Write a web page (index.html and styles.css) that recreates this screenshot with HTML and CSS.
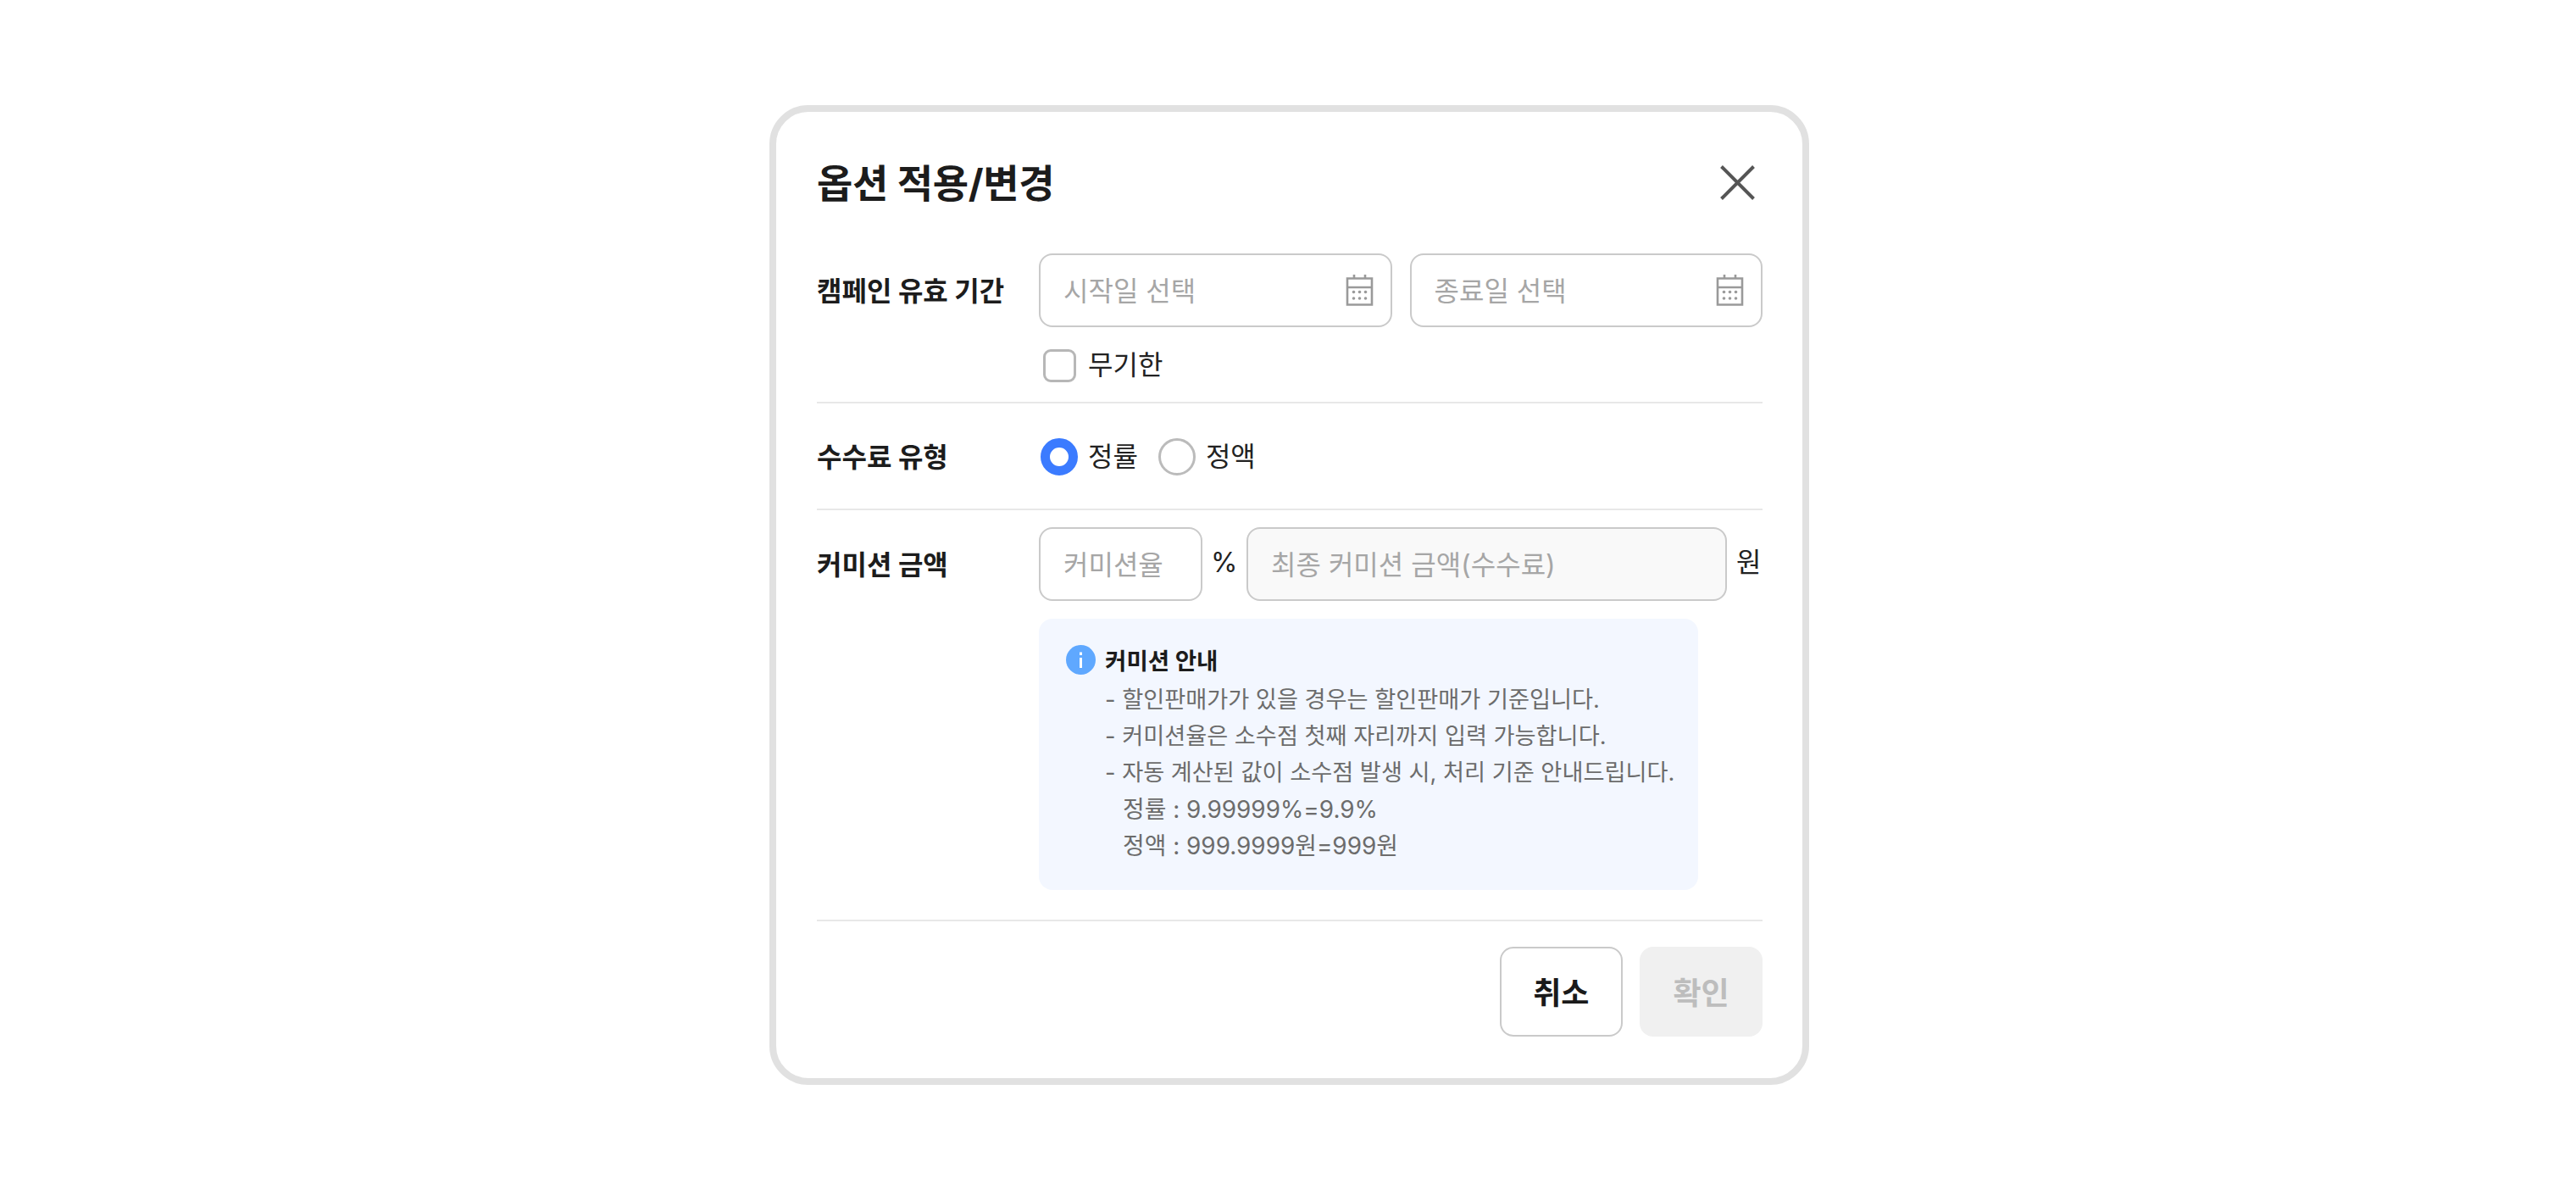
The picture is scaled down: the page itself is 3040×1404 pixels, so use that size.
FILE: index.html
```html
<!DOCTYPE html>
<html lang="ko">
<head>
<meta charset="utf-8">
<title>옵션 적용/변경</title>
<link rel="stylesheet" href="styles.css">
</head>
<body>
<main class="page">
  <section class="modal">
    <header class="modal-head">
      <h1 class="modal-title">옵션 적용/변경</h1>
      <svg class="close-icon" viewBox="0 0 41 41" aria-label="닫기"><path d="M1.5 1.5 39.5 39.5M39.5 1.5 1.5 39.5"/></svg>
    </header>

    <div class="row row-period">
      <div class="row-label">캠페인 유효 기간</div>
      <div class="row-body">
        <div class="fields">
          <div class="field field-date"><span class="placeholder">시작일 선택</span>
            <svg class="cal-icon" viewBox="0 0 33 37"><path class="cal-line" d="M2 4.5H31V35.500H2ZM2 15H31M10 0V4.500M23 0V4.500"/><g class="cal-dots"><circle cx="9.500" cy="20.500" r="1.800"/><circle cx="16.500" cy="20.500" r="1.800"/><circle cx="23.500" cy="20.500" r="1.800"/><circle cx="9.500" cy="28" r="1.800"/><circle cx="16.500" cy="28" r="1.800"/><circle cx="23.500" cy="28" r="1.800"/></g></svg>
          </div>
          <div class="field field-date"><span class="placeholder">종료일 선택</span>
            <svg class="cal-icon" viewBox="0 0 33 37"><path class="cal-line" d="M2 4.5H31V35.500H2ZM2 15H31M10 0V4.500M23 0V4.500"/><g class="cal-dots"><circle cx="9.500" cy="20.500" r="1.800"/><circle cx="16.500" cy="20.500" r="1.800"/><circle cx="23.500" cy="20.500" r="1.800"/><circle cx="9.500" cy="28" r="1.800"/><circle cx="16.500" cy="28" r="1.800"/><circle cx="23.500" cy="28" r="1.800"/></g></svg>
          </div>
        </div>
        <label class="check"><span class="checkbox"></span><span class="opt-text">무기한</span></label>
      </div>
    </div>

    <div class="row row-type">
      <div class="row-label">수수료 유형</div>
      <div class="radios">
        <span class="radio radio-on"></span><span class="opt-text radio-text">정률</span>
        <span class="radio"></span><span class="opt-text">정액</span>
      </div>
    </div>

    <div class="row row-amount">
      <div class="row-label">커미션 금액</div>
      <div class="row-body">
        <div class="fields">
          <div class="field field-rate"><span class="placeholder">커미션율</span></div>
          <span class="unit unit-pct">%</span>
          <div class="field field-total"><span class="placeholder">최종 커미션 금액(수수료)</span></div>
          <span class="unit unit-won">원</span>
        </div>
        <aside class="notice">
          <div class="notice-head">
            <svg class="info-icon" viewBox="0 0 35 35"><circle cx="17.500" cy="17.500" r="17.500" class="info-bg"/><rect x="16" y="15" width="3" height="12" class="info-fg"/><rect x="16" y="8.500" width="3" height="3.500" class="info-fg"/></svg>
            <strong class="notice-title">커미션 안내</strong>
          </div>
          <ul class="notice-list">
            <li>- 할인판매가가 있을 경우는 할인판매가 기준입니다.</li>
            <li>- 커미션율은 소수점 첫째 자리까지 입력 가능합니다.</li>
            <li>- 자동 계산된 값이 소수점 발생 시, 처리 기준 안내드립니다.</li>
            <li class="sub">정률 : 9.99999%=9.9%</li>
            <li class="sub">정액 : 999.9999원=999원</li>
          </ul>
        </aside>
      </div>
    </div>

    <footer class="modal-foot">
      <button class="btn btn-cancel" type="button">취소</button>
      <button class="btn btn-ok" type="button">확인</button>
    </footer>
  </section>
</main>
</body>
</html>
```

FILE: styles.css
```css
* { box-sizing: border-box; }
html, body { margin: 0; padding: 0; background: #fff; }
body {
  font-family: Inter, "Noto Sans CJK KR", sans-serif;
  color: #1c1c1c;
}
.page { padding: 124px 0 0 908px; height: 1404px; overflow: hidden; }

.modal {
  width: 1227px;
  height: 1156px;
  background: #fff;
  border: 8px solid #e1e1e1;
  border-radius: 46px;
  padding: 0 47px 0 48px;
}

.modal-head {
  height: 167px;
  display: flex;
  justify-content: space-between;
  align-items: flex-start;
}
.modal-title {
  margin: 60px 0 0;
  font-size: 46px;
  line-height: 48px;
  font-weight: 700;
  letter-spacing: -0.3px;
}
.close-icon { width: 41px; height: 41px; margin: 63px 9px 0 0; }
.close-icon path { fill: none; stroke: #555; stroke-width: 4; }

.row { display: flex; border-bottom: 2px solid #e8e8e8; }
.row-label {
  width: 262px;
  flex: none;
  height: 87px;
  display: flex;
  align-items: center;
  padding-bottom: 3px;
  font-size: 32px;
  font-weight: 700;
  white-space: nowrap;
}
.row-body { flex: 1; min-width: 0; }
.fields { display: flex; align-items: center; }

.row-period { height: 177px; }
.row-period .fields { gap: 21px; }
.row-type { height: 126px; align-items: center; padding-top: 1px; }
.row-type .row-label { height: 44px; }
.row-amount { padding-top: 20px; height: 485px; }

.field {
  height: 87px;
  border: 2.500px solid #cacaca;
  border-radius: 16px;
  background: #fff;
  display: flex;
  align-items: center;
  justify-content: space-between;
  padding: 0 20px 0 27px;
}
.field-date { flex: 1; }
.field-rate { width: 193px; }
.field-total { width: 567px; background: #f9f9f9; }
.placeholder { font-size: 32px; color: #a6a6a6; white-space: nowrap; padding-bottom: 3px; }
.cal-icon { width: 33px; height: 37px; flex: none; }
.cal-line { fill: none; stroke: #9a9a9a; stroke-width: 2.600; }
.cal-dots { fill: #9a9a9a; }

.unit { font-size: 32px; color: #222; line-height: 1; padding-bottom: 3px; }
.unit-pct { width: 52px; padding-left: 10px; }
.unit-won { padding-left: 11px; }

.opt-text { font-size: 32px; color: #222; line-height: 44px; }
.check { display: flex; align-items: center; margin: 23px 0 0 5px; gap: 14px; }
.checkbox {
  width: 39px;
  height: 39px;
  border: 3.500px solid #b7b7b7;
  border-radius: 9px;
}

.radios { display: flex; align-items: center; padding-left: 2px; }
.radio {
  width: 44px;
  height: 44px;
  flex: none;
  border-radius: 50%;
  border: 3.500px solid #bbb;
  margin-right: 12px;
}
.radio-on { border: 11px solid #3b7bff; background: #fff; }
.radio-text { margin-right: 24px; }

.notice {
  width: 778px;
  height: 320px;
  margin-top: 21px;
  padding: 31px 0 0 32px;
  background: #f3f7ff;
  border-radius: 16px;
}
.notice-head { display: flex; align-items: center; gap: 11px; height: 35px; }
.info-icon { width: 35px; height: 35px; flex: none; }
.info-bg { fill: #5fa8ff; }
.info-fg { fill: #fff; }
.notice-title { font-size: 27.600px; font-weight: 700; color: #1c1c1c; white-space: nowrap; padding-bottom: 2px; }
.notice-list {
  list-style: none;
  margin: 8px 0 0 46px;
  padding: 0;
  font-size: 27.200px;
  line-height: 43.200px;
  color: #6c6c6c;
  white-space: nowrap;
}
.notice-list .sub { padding-left: 21px; font-size: 27.900px; }

.modal-foot { display: flex; justify-content: flex-end; gap: 20px; padding-top: 30px; }
.btn {
  width: 145px;
  height: 106px;
  border-radius: 16px;
  font-family: inherit;
  font-size: 36px;
  font-weight: 700;
  padding: 0 0 3px;
}
.btn-cancel { width: 145.500px; background: #fff; border: 2.500px solid #cacaca; color: #1a1a1a; }
.btn-ok { background: #f0f0f0; border: 0; color: #bdbdbd; }
```
